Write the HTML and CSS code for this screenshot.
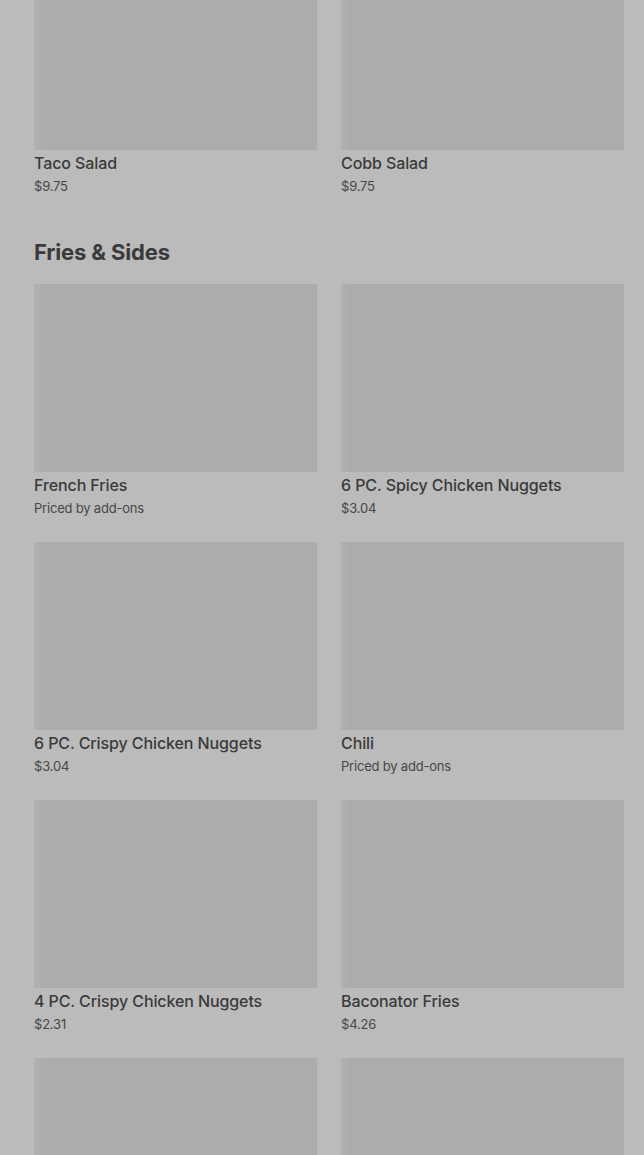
FILE: index.html
```html
<!DOCTYPE html>
<html lang="en">
<head>
    <meta charset="UTF-8">
    <meta name="viewport" content="width=device-width, initial-scale=1.0">
    <title>Menu</title>
    <link rel="stylesheet" href="styles.css">
</head>
<body>
    <main class="menu">
        <!-- Salads (scrolled past) -->
        <section class="categoria">
            <div class="productos">
                <div class="producto">
                    <div class="foto"></div>
                    <p class="nombre">Taco Salad</p>
                    <p class="precio">$9.75</p>
                </div>
                <div class="producto">
                    <div class="foto"></div>
                    <p class="nombre">Cobb Salad</p>
                    <p class="precio">$9.75</p>
                </div>
            </div>
        </section>

        <section class="categoria">
            <h2 class="titulo">Fries &amp; Sides</h2>
            <div class="productos">
                <div class="producto">
                    <div class="foto"></div>
                    <p class="nombre">French Fries</p>
                    <p class="precio">Priced by add-ons</p>
                </div>
                <div class="producto">
                    <div class="foto"></div>
                    <p class="nombre">6 PC. Spicy Chicken Nuggets</p>
                    <p class="precio">$3.04</p>
                </div>
                <div class="producto">
                    <div class="foto"></div>
                    <p class="nombre">6 PC. Crispy Chicken Nuggets</p>
                    <p class="precio">$3.04</p>
                </div>
                <div class="producto">
                    <div class="foto"></div>
                    <p class="nombre">Chili</p>
                    <p class="precio">Priced by add-ons</p>
                </div>
                <div class="producto">
                    <div class="foto"></div>
                    <p class="nombre">4 PC. Crispy Chicken Nuggets</p>
                    <p class="precio">$2.31</p>
                </div>
                <div class="producto">
                    <div class="foto"></div>
                    <p class="nombre">Baconator Fries</p>
                    <p class="precio">$4.26</p>
                </div>
                <div class="producto">
                    <div class="foto"></div>
                </div>
                <div class="producto">
                    <div class="foto"></div>
                </div>
            </div>
        </section>
    </main>
</body>
</html>
```

FILE: styles.css
```css
/* General */
body {
    margin: 0;
    background-color: #bbbbbb;
    font-family: Inter, "Noto Sans", sans-serif;
    color: #3a3a3a;
    overflow: hidden;
}

/* Page scrolled down: first row is cut at the top */
.menu {
    margin-top: -38px;
    padding: 0 20px 0 34px;
}

.categoria {
    margin-bottom: 42px;
}

.titulo {
    margin: 0 0 18px;
    font-size: 22px;
    line-height: 28px;
    font-weight: 700;
    letter-spacing: -0.15px;
    color: #3a3a3a;
}

/* Product grid */
.productos {
    display: grid;
    grid-template-columns: 1fr 1fr;
    column-gap: 24px;
    row-gap: 24px;
}

.foto {
    height: 188px;
    background: linear-gradient(90deg, #b1b1b1 0, #acacac 8px, #acacac 100%);
}

.nombre {
    margin: 3px 0 0;
    font-size: 16px;
    line-height: 20px;
    font-weight: 500;
    letter-spacing: -0.1px;
    color: #3a3a3a;
}

.precio {
    margin: 3px 0 0;
    font-size: 13px;
    line-height: 20px;
    color: #474747;
    letter-spacing: -0.2px;
}
```
